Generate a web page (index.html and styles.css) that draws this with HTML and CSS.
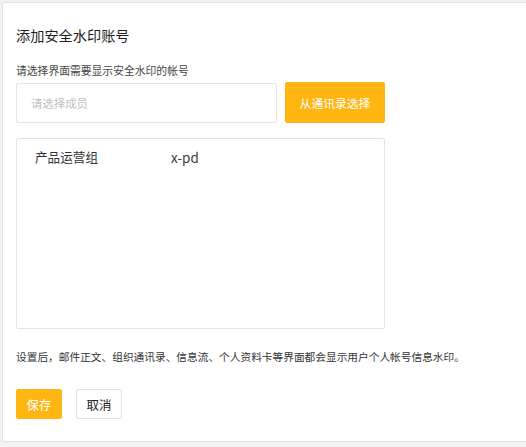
FILE: index.html
```html
<!DOCTYPE html>
<html lang="zh-CN">
<head>
<meta charset="utf-8">
<title>添加安全水印账号</title>
<link rel="stylesheet" href="styles.css">
</head>
<body>
<div class="card">
  <h1 class="title">添加安全水印账号</h1>
  <div class="label">请选择界面需要显示安全水印的帐号</div>
  <div class="pick-row">
    <input class="input" type="text" placeholder="请选择成员">
    <button class="btn btn-primary btn-pick">从通讯录选择</button>
  </div>
  <div class="list">
    <div class="list-row">
      <span class="col-name">产品运营组</span>
      <span class="col-id">x-pd</span>
    </div>
  </div>
  <p class="desc">设置后，邮件正文、组织通讯录、信息流、个人资料卡等界面都会显示用户个人帐号信息水印。</p>
  <div class="actions">
    <button class="btn btn-primary btn-small">保存</button>
    <button class="btn btn-default btn-small">取消</button>
  </div>
</div>
</body>
</html>
```

FILE: styles.css
```css
html, body {
  margin: 0;
  padding: 0;
}
body {
  background: #f3f3f3;
  font-family: "Noto Sans CJK SC", "Liberation Sans", sans-serif;
  color: #333;
  overflow: hidden;
}
.card {
  box-sizing: border-box;
  margin: 2px 0 0 2px;
  height: 440px;
  background: #fff;
  border: 1px solid #e4e4e4;
  border-right: none;
  padding: 22px 0 0 13px;
}
.title {
  margin: 0;
  font-size: 14.2px;
  line-height: 20px;
  font-weight: normal;
  color: #1e1e1e;
}
.label {
  margin-top: 17px;
  font-size: 10.8px;
  line-height: 16px;
  color: #444;
}
.pick-row {
  margin-top: 4px;
  display: flex;
  align-items: center;
  gap: 8px;
}
.input {
  box-sizing: border-box;
  width: 261px;
  height: 40px;
  border: 1px solid #e6e6e6;
  border-radius: 2px;
  padding: 0 14px;
  font-family: inherit;
  font-size: 11.4px;
  color: #333;
  outline: none;
}
.input::placeholder {
  color: #c0c0c0;
}
.btn {
  box-sizing: border-box;
  font-family: inherit;
  border-radius: 2px;
  cursor: pointer;
  padding: 0;
}
.btn-primary {
  background: #ffb612;
  border: 1px solid #ffb612;
  color: #fff;
}
.btn-default {
  background: #fff;
  border: 1px solid #e3e3e3;
  color: #222;
}
.btn-pick {
  width: 100px;
  height: 41px;
  font-size: 11.8px;
}
.list {
  box-sizing: border-box;
  margin-top: 15px;
  width: 369px;
  height: 191px;
  border: 1px solid #e4e4e4;
  border-radius: 2px;
  padding: 9px 0 0 18px;
}
.list-row {
  display: flex;
  font-size: 12.6px;
  line-height: 18px;
  color: #333;
}
.col-name {
  width: 136px;
}
.col-id {
  font-size: 13.4px;
  color: #3a3a3a;
}
.desc {
  margin: 20px 0 0;
  font-size: 10.7px;
  line-height: 16px;
  color: #333;
}
.actions {
  margin-top: 24px;
  display: flex;
  gap: 14px;
}
.btn-small {
  width: 46px;
  height: 30px;
  font-size: 12.5px;
}
```
